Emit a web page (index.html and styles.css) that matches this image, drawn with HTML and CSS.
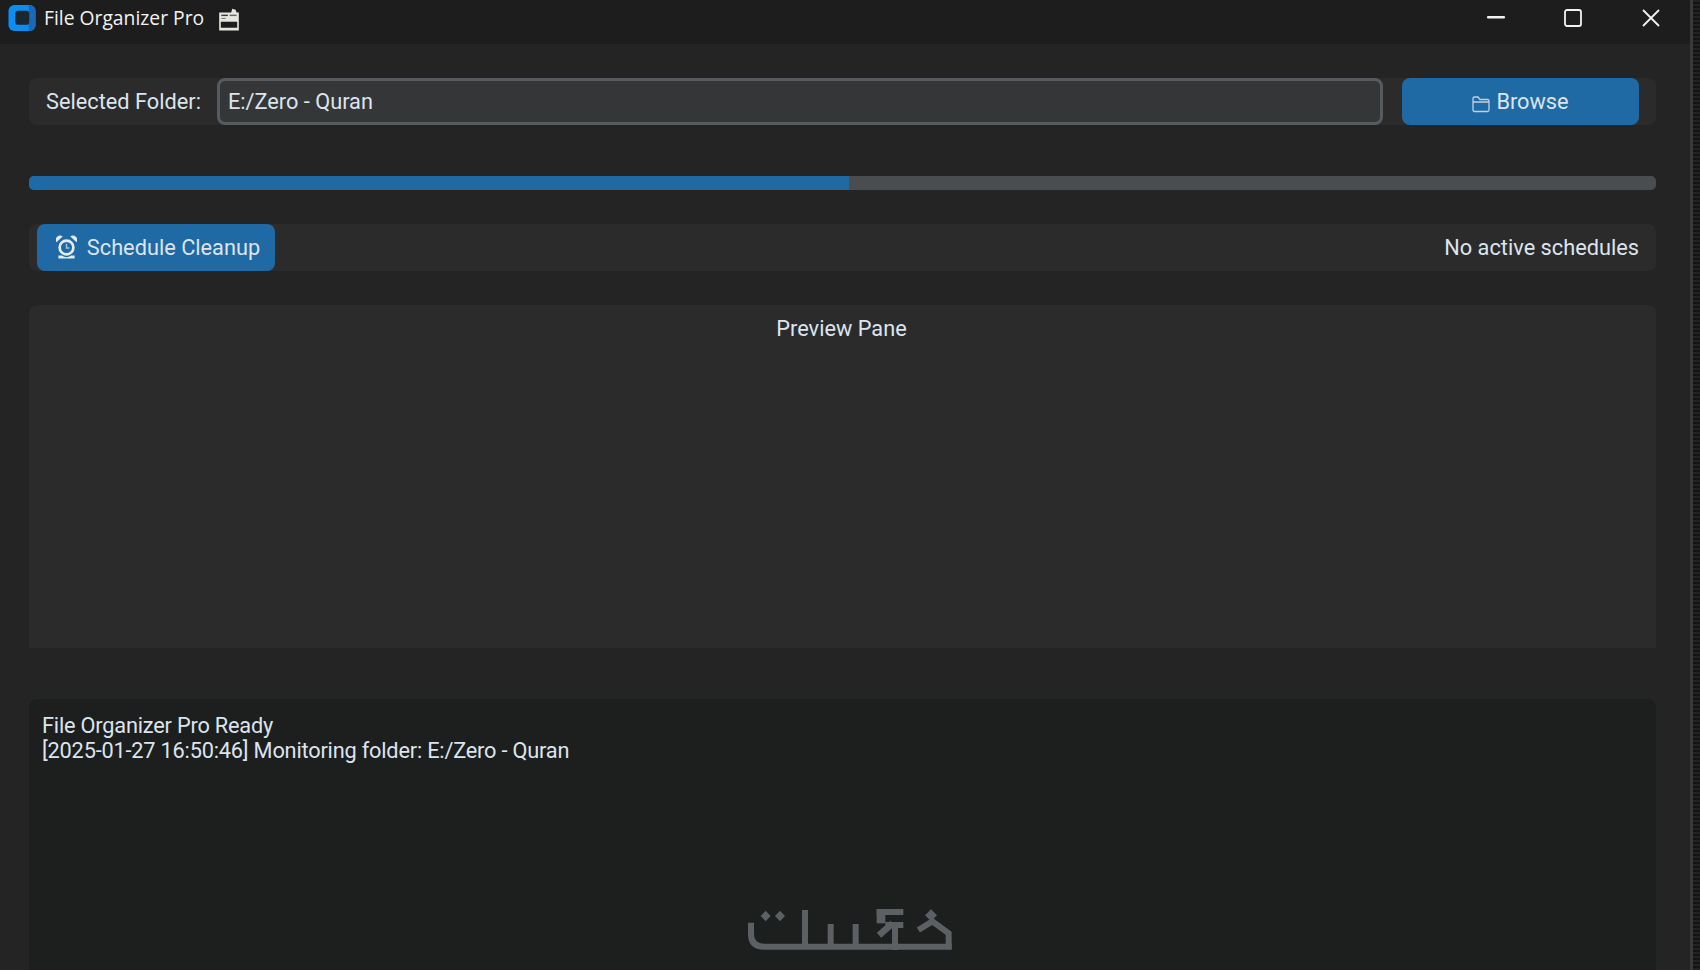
FILE: index.html
```html
<!DOCTYPE html>
<html lang="en">
<head>
<meta charset="utf-8">
<title>File Organizer Pro</title>
<link rel="stylesheet" href="styles.css">
</head>
<body>
<div class="desktop">
  <div class="window">
    <header class="titlebar">
      <svg class="app-logo" viewBox="0 0 28 28" aria-hidden="true">
        <rect x="0" y="0" width="28" height="27" rx="6" fill="#0c8df2"/>
        <path d="M21 0h1a6 6 0 0 1 6 6v15a6 6 0 0 1-6 6h-1z" fill="#1a68b8"/>
        <rect x="7" y="6" width="14.500" height="14.500" rx="3" fill="#1c2630"/>
      </svg>
      <span class="app-title">File Organizer Pro</span>
      <svg class="clapper" viewBox="0 0 20 22" aria-hidden="true">
        <path d="M1 5h11l1-3.500 3 1 1 2.500h2v16.500H1z" fill="#e6e6e0"/>
        <rect x="3" y="7" width="6" height="1.300" fill="#3a3a3a"/>
        <rect x="10.500" y="7" width="6.500" height="1.300" fill="#6a6a6a"/>
        <rect x="3" y="10" width="4" height="1" fill="#7a7a7a"/>
        <rect x="2.500" y="13.500" width="15" height="5.500" fill="#1c1c1c"/>
      </svg>
      <div class="win-controls">
        <svg class="win-min" viewBox="0 0 18 3" aria-hidden="true"><rect width="18" height="2.500" rx="1" fill="#f2f2f2"/></svg>
        <svg class="win-max" viewBox="0 0 18 18" aria-hidden="true"><rect x="1" y="1" width="16" height="16" rx="2" fill="none" stroke="#f2f2f2" stroke-width="1.800"/></svg>
        <svg class="win-close" viewBox="0 0 18 18" aria-hidden="true"><path d="M1 1l16 16M17 1L1 17" stroke="#f2f2f2" stroke-width="1.800" fill="none"/></svg>
      </div>
    </header>
    <main class="content">
      <section class="panel folder-row">
        <span class="label">Selected Folder:</span>
        <div class="entry">E:/Zero - Quran</div>
        <button class="btn btn-browse">
          <svg class="icon-folder" viewBox="0 0 18 18" aria-hidden="true">
            <path d="M1 15V3.500A1.500 1.500 0 0 1 2.500 2H6l2 2.500h7.500A1.500 1.500 0 0 1 17 6v9a1.500 1.500 0 0 1-1.500 1.500h-13A1.500 1.500 0 0 1 1 15zM1 7h16" fill="none" stroke="#bcd3e6" stroke-width="1.300"/>
          </svg>
          <span>Browse</span>
        </button>
      </section>
      <div class="progress"><div class="progress-fill" style="width:50.400%"></div></div>
      <section class="panel schedule-row">
        <button class="btn btn-schedule">
          <svg class="icon-alarm" viewBox="0 0 22 24" aria-hidden="true">
            <circle cx="11" cy="12.500" r="7.200" fill="none" stroke="#e4ebf2" stroke-width="2.800"/>
            <path d="M11 8.500v4.500h3" fill="none" stroke="#a9c4da" stroke-width="1.500"/>
            <path d="M0.500 7a4.500 4.500 0 0 1 6.500-6zM21.500 7a4.500 4.500 0 0 0-6.500-6z" fill="#e4ebf2"/>
            <path d="M2.500 24h17v-3h-3.500a9 9 0 0 1-10 0H2.500z" fill="#e4ebf2"/>
          </svg>
          <span>Schedule Cleanup</span>
        </button>
        <span class="label">No active schedules</span>
      </section>
      <section class="preview">
        <h2 class="preview-title">Preview Pane</h2>
      </section>
      <section class="log">
        <p class="log-line">File Organizer Pro Ready</p>
        <p class="log-line">[2025-01-27 16:50:46] Monitoring folder: E:/Zero - Quran</p>
        <svg class="watermark" viewBox="0 0 840 270" aria-hidden="true">
          <g fill="none" stroke="#5c6063" stroke-width="18">
            <path d="M153 128V162Q153 200 192 200H755"/>
            <path d="M315 90V200"/>
            <path d="M392 132V200"/>
            <path d="M467 132V200"/>
            <path d="M585 128V210"/>
            <path d="M530 96H610"/>
            <path d="M655 150L697 124L746 160V208"/>
            <path d="M556 135H610"/>
            <path d="M537 166L578 130" stroke-width="20"/>
          </g>
          <g fill="#5c6063">
            <path d="M530 88H556V130H530z"/>
            <path d="M197 92l15 16-15 16-15-16zM240 92l15 16-15 16-15-16zM693 88l18 18-18 18-18-18z"/>
          </g>
        </svg>
      </section>
    </main>
  </div>
  <div class="edge"></div>
</div>
</body>
</html>
```

FILE: styles.css
```css
* { box-sizing: border-box; }
html, body { margin: 0; height: 100%; background: #111; overflow: hidden; }
body { font-family: Roboto, "Liberation Sans", sans-serif; color: #dce4ee; font-size: 21.750px; }

.desktop { display: flex; width: 1700px; height: 970px; }
.window { width: 1690px; height: 970px; display: flex; flex-direction: column; background: #242424; }
.edge {
  width: 10px;
  border-left: 3px solid #3a3a3a;
  background: repeating-linear-gradient(0deg, #222 0 2px, #141414 2px 4px);
}

.titlebar { height: 44px; flex: none; display: flex; align-items: center; padding-left: 8px; background: #1d1d1d; }
.app-logo { width: 28px; height: 27px; margin-top: -8px; }
.app-title { margin-left: 8px; margin-top: -10px; font-family: "Open Sans", sans-serif; font-size: 19.300px; color: #f2f2f2; }
.clapper { width: 22px; height: 24px; margin-left: 14px; margin-top: -7px; }
.win-controls { margin-left: auto; margin-top: -9px; display: flex; align-items: center; padding-right: 30px; }
.win-min { width: 18px; height: 3px; }
.win-max { width: 18px; height: 18px; margin-left: 59px; }
.win-close { width: 18px; height: 18px; margin-left: 60px; }

.content { flex: 1; min-height: 0; padding: 34px 34px 0 29px; display: flex; flex-direction: column; }

.panel { background: #2b2b2b; border-radius: 8px; height: 47px; display: flex; align-items: center; flex: none; }
.label { white-space: nowrap; }

.folder-row { padding: 0 17px; }
.entry {
  flex: 1;
  height: 47px;
  margin: 0 19px 0 16px;
  padding: 0 8px;
  display: flex;
  align-items: center;
  background: #343638;
  border: 3px solid #565b5e;
  border-radius: 8px;
}

.btn {
  height: 47px;
  border: 0;
  border-radius: 8px;
  background: #1f6aa5;
  color: #dce4ee;
  font: inherit;
  display: flex;
  align-items: center;
  justify-content: center;
  padding: 0 0 1px;
}
.btn-browse { width: 237px; gap: 6px; }
.icon-folder { width: 18px; height: 18px; margin-top: 6px; }
.btn-schedule { width: 238px; gap: 10px; padding-left: 4px; }
.icon-alarm { width: 21px; height: 24px; }

.progress { height: 14px; margin-top: 51px; flex: none; background: #4a4d50; border-radius: 5px; overflow: hidden; }
.progress-fill { height: 100%; background: #1f6aa5; }

.schedule-row { margin-top: 34px; padding: 0 17px 0 8px; justify-content: space-between; }

.preview { height: 343px; margin-top: 34px; flex: none; background: #2b2b2b; border-radius: 8px 8px 0 0; }
.preview-title { margin: 0; padding: 11px 2px 0 0; text-align: center; font: inherit; line-height: 26px; }

.log { position: relative; flex: 1; margin-top: 51px; padding: 14px 13px 0; background: #1d1e1e; border-radius: 8px 8px 0 0; }
.log-line { margin: 0; line-height: 25px; letter-spacing: -0.2px; }
.watermark { position: absolute; left: 671px; top: 181px; width: 280px; height: 90px; }
```
